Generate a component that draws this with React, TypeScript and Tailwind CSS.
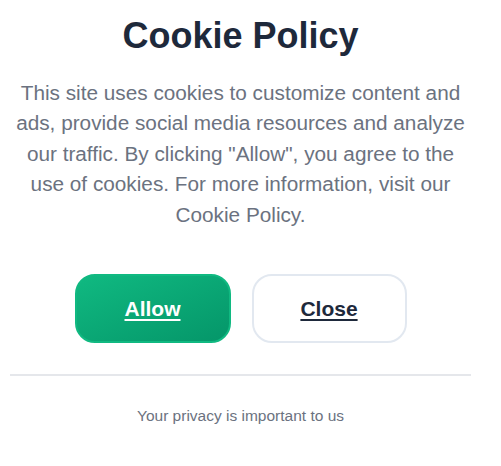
export default function App() {
  return (
    <div
      className="min-h-[466px] w-[481px] bg-white px-[10px] pt-[16px] text-center"
      style={{ fontFamily: '"Liberation Sans", Arial, sans-serif' }}
    >
      <h1 className="text-[36px] font-bold leading-[40px] text-[#1e293b]">Cookie Policy</h1>

      <p className="mt-[22px] text-[20.75px] leading-[30.4px] text-[#6b7280]">
        This site uses cookies to customize content and ads, provide social media resources and analyze
        our traffic. By clicking "Allow", you agree to the use of cookies. For more information, visit our
        Cookie Policy.
      </p>

      <div className="mt-[44px] flex justify-center gap-[21px]">
        <button
          type="button"
          className="flex h-[69px] w-[156px] items-center justify-center rounded-[20px] border-2 border-[#10b981] bg-gradient-to-br from-[#10b981] to-[#059669] text-[21px] font-bold text-white underline underline-offset-[3px]"
        >
          Allow
        </button>
        <button
          type="button"
          className="flex h-[69px] w-[155px] items-center justify-center rounded-[20px] border-2 border-[#e2e8f0] bg-white text-[21px] font-bold text-[#1e293b] underline underline-offset-[3px]"
        >
          Close
        </button>
      </div>

      <div className="mt-[31px] h-[2px] w-full bg-[#e5e7eb]" />

      <p className="mt-[30px] text-[15.5px] leading-[20px] text-[#6b7280]">Your privacy is important to us</p>
    </div>
  );
}
